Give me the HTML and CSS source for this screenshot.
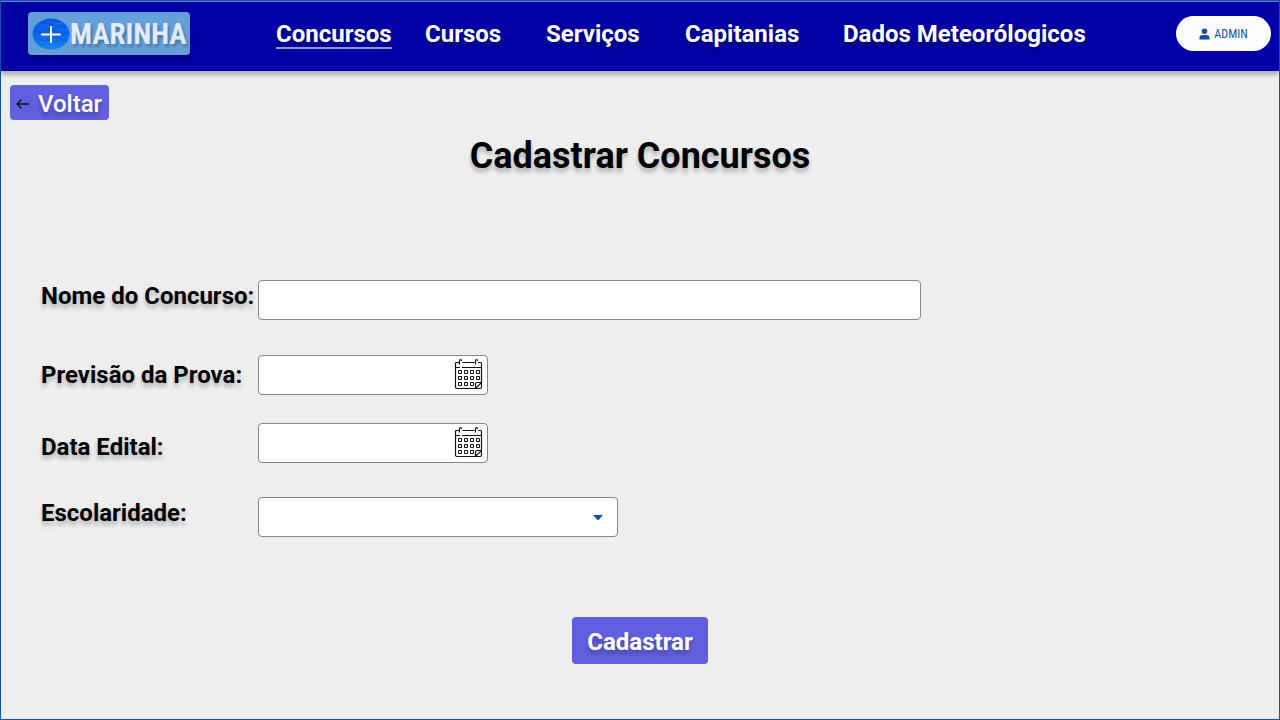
FILE: index.html
```html
<!DOCTYPE html>
<html lang="pt-BR">
<head>
<meta charset="utf-8">
<meta name="viewport" content="width=device-width, initial-scale=1">
<title>Cadastrar Concursos</title>
<link rel="stylesheet" href="styles.css">
</head>
<body>
<svg class="sprite" aria-hidden="true">
  <symbol id="calendar" viewBox="0 0 29 32">
    <g fill="none" stroke="#111">
      <path stroke-width="1.2" d="M5 4.500H2.500Q1.500 4.500 1.500 5.500V29Q1.500 30.500 3 30.500H21.500L27.500 24.500V5.500Q27.500 4.500 26.500 4.500H24M8.500 4.500H20.500M1.500 9.500H6M8 9.500H27.500M21.500 30V26Q21.500 24.500 23 24.500H27.500M27.500 24V29Q27.500 30.500 26 30.500H22"/>
      <path stroke-width="1.2" d="M5.500 6.500V3Q5.500 1.500 6.500 1.500T7.500 3M21.500 6.500V3Q21.500 1.500 22.500 1.500T23.500 3"/>
      <path stroke-width="1" d="M4.500 12.500h3v3h-3zM10.500 12.500h3v3h-3zM16.500 12.500h3v3h-3zM22.500 12.500h3v3h-3zM4.500 18.500h3v3h-3zM10.500 18.500h3v3h-3zM16.500 18.500h3v3h-3zM22.500 18.500h3v3h-3zM4.500 24.500h3v3h-3zM10.500 24.500h3v3h-3zM16.500 24.500h3v3h-3z"/>
    </g>
  </symbol>
</svg>
<header class="header">
  <a class="logo" href="#" aria-label="Mais Marinha">
    <svg class="logo-mark" viewBox="0 0 38 32" aria-hidden="true">
      <defs>
        <clipPath id="sea"><ellipse cx="19" cy="16" rx="18.500" ry="15.500"/></clipPath>
        <linearGradient id="water" x1="0" y1="0" x2="0" y2="1"><stop offset="0" stop-color="#0b57e0"/><stop offset=".55" stop-color="#0c66ee"/><stop offset="1" stop-color="#1285ed"/></linearGradient>
      </defs>
      <g clip-path="url(#sea)">
        <path fill="url(#water)" d="M0 0h38v32H0z"/>
        <path fill="none" stroke="#298ff2" stroke-width="1" opacity=".45" d="M3 8q6-3 12 0t13-2M20 4q5 3 12 1M1 19q7-3 13 0t12 1 12-2M3 24q8-2 14 1t18-1M9 29q8-3 18 0M26 12q5-2 10 1"/>
        <path fill="none" stroke="#0648d0" stroke-width="1" opacity=".4" d="M2 13q7 3 12 0t11 2 12-2M6 22q6 2 13-1t17 2M8 6q8-2 13 1"/>
      </g>
      <path stroke="#fff" stroke-width="2" stroke-linecap="round" d="M10 16.500h18M19 9v15"/>
    </svg>
    <span class="logo-name">MARINHA</span>
  </a>
  <nav class="nav" aria-label="Principal">
    <a class="nav-link nav-link-active" href="#" aria-current="page">Concursos</a>
    <a class="nav-link" href="#">Cursos</a>
    <a class="nav-link" href="#">Serviços</a>
    <a class="nav-link" href="#">Capitanias</a>
    <a class="nav-link" href="#">Dados Meteorólogicos</a>
  </nav>
  <button class="admin" type="button">
    <svg class="admin-icon" viewBox="0 0 12 12" aria-hidden="true"><circle cx="6" cy="3" r="3"/><path d="M.5 12V10.500Q.5 7 4 7h4q3.500 0 3.500 3.500V12z"/></svg>
    ADMIN
  </button>
</header>
<main class="main">
  <button class="button back" type="button">
    <svg class="back-icon" viewBox="0 0 14 12" aria-hidden="true"><path d="M13 6H1M5.500 1.500 1 6l4.500 4.500"/></svg>
    Voltar
  </button>
  <h1 class="title">Cadastrar Concursos</h1>
  <form class="form">
    <div class="row row-name">
      <label class="label" for="nome">Nome do Concurso:</label>
      <input class="control" id="nome" type="text">
    </div>
    <div class="row row-exam">
      <label class="label" for="prova">Previsão da Prova:</label>
      <div class="field field-date">
        <input class="control" id="prova" type="text">
        <button class="picker" type="button" aria-label="Escolher data da prova"><svg class="picker-icon"><use href="#calendar"/></svg></button>
      </div>
    </div>
    <div class="row row-notice">
      <label class="label" for="edital">Data Edital:</label>
      <div class="field field-date">
        <input class="control" id="edital" type="text">
        <button class="picker" type="button" aria-label="Escolher data do edital"><svg class="picker-icon"><use href="#calendar"/></svg></button>
      </div>
    </div>
    <div class="row row-school">
      <label class="label" for="escolaridade">Escolaridade:</label>
      <div class="field field-select">
        <select class="control" id="escolaridade"><option></option></select>
        <svg class="arrow" viewBox="0 0 10 5" aria-hidden="true"><path d="M0 0h10L6 4.500Q5 5.500 4 4.500z"/></svg>
      </div>
    </div>
    <button class="button submit" type="submit">Cadastrar</button>
  </form>
</main>
</body>
</html>
```
FILE: styles.css
```css
* {
  box-sizing: border-box;
}

body {
  min-height: 100vh;
  margin: 0;
  border: 1px solid #144eb0;
  background: #eee;
  color: #000;
  font-family: Roboto, "Liberation Sans", sans-serif;
}

.sprite {
  position: absolute;
  width: 0;
  height: 0;
}

.header {
  display: flex;
  align-items: center;
  height: 70px;
  padding: 0 8px 6px 27px;
  border-top: 1px solid #6686d0;
  background: #0000a5;
  box-shadow: 0 4px 4px rgba(0, 0, 0, .25);
}

.logo {
  display: flex;
  flex: none;
  align-items: center;
  width: 162px;
  height: 43px;
  padding-left: 4px;
  border-radius: 4px;
  background: #659fdb;
  box-shadow: 0 4px 4px rgba(0, 0, 0, .25);
  color: #e2ebff;
  text-decoration: none;
}

.logo-mark {
  flex: none;
  width: 38px;
  height: 32px;
}

.logo-name {
  font: bold 29px/40px "Liberation Sans Narrow", "Roboto Condensed", sans-serif;
  text-shadow: 2px 3px 3px rgba(0, 0, 0, .25);
}

.nav {
  display: grid;
  flex: 1;
  grid-template-columns: 149px 121px 139px 158px auto;
  margin-left: 86px;
}

.nav-link {
  justify-self: start;
  color: #fff;
  font-size: 24px;
  font-weight: 700;
  line-height: 30px;
  text-decoration: none;
  text-shadow: 0 4px 4px rgba(0, 0, 0, .25);
  white-space: nowrap;
}

.nav-link-active {
  box-shadow: 0 -2px 0 #9a9adb inset;
}

.admin {
  display: flex;
  flex: none;
  align-items: center;
  justify-content: center;
  gap: 4px;
  width: 95px;
  height: 35px;
  padding: 0;
  border: 0;
  border-radius: 18px;
  background: #fdfdfd;
  color: #144eb0;
  font: 12px/16px "Liberation Sans Narrow", "Roboto Condensed", sans-serif;
}

.admin-icon {
  width: 11px;
  height: 12px;
  fill: #144eb0;
}

.main {
  padding: 14px 9px 20px;
}

.button {
  border: 0;
  border-radius: 4px;
  background: #605fdf;
  color: #fff;
  font-family: inherit;
  font-size: 24px;
  text-shadow: 0 4px 4px rgba(0, 0, 0, .25);
}

.back {
  display: flex;
  align-items: center;
  gap: 8px;
  height: 35px;
  padding: 2px 7px 0 6px;
  font-weight: 500;
}

.back-icon {
  width: 14px;
  height: 12px;
  fill: none;
  stroke: #111;
  stroke-width: 1.3;
}

.title {
  margin: 12px 0 0;
  font-size: 36px;
  font-weight: 700;
  line-height: 48px;
  text-align: center;
  text-shadow: 0 4px 4px rgba(0, 0, 0, .25);
}

.form {
  display: flex;
  flex-direction: column;
  padding: 100px 31px 0;
}

.row {
  display: grid;
  grid-template-columns: 217px minmax(0, 663px);
  align-items: center;
}

.row-name,
.row-school {
  align-items: start;
}

.row-exam {
  margin: 35px 0 28px;
}

.row-notice {
  align-items: end;
}

.row-school {
  margin-top: 34px;
}

.label {
  font-size: 24px;
  font-weight: 700;
  line-height: 32px;
  text-shadow: 0 4px 4px rgba(0, 0, 0, .25);
  white-space: nowrap;
}

.field {
  position: relative;
}

.field-date {
  max-width: 230px;
}

.field-select {
  max-width: 360px;
}

.control {
  display: block;
  width: 100%;
  height: 40px;
  padding: 0 12px;
  border: 1px solid #868686;
  border-radius: 4px;
  background: #fff;
  font: inherit;
  font-size: 20px;
  appearance: none;
}

.picker {
  position: absolute;
  top: 3px;
  right: 5px;
  padding: 0;
  border: 0;
  background: none;
}

.picker-icon {
  display: block;
  width: 29px;
  height: 32px;
}

.arrow {
  position: absolute;
  top: 18px;
  right: 15px;
  width: 10px;
  height: 5px;
  fill: #144eb0;
  pointer-events: none;
}

.submit {
  align-self: center;
  height: 47px;
  margin-top: 80px;
  padding: 2px 15px 0;
  font-weight: 700;
}
```
